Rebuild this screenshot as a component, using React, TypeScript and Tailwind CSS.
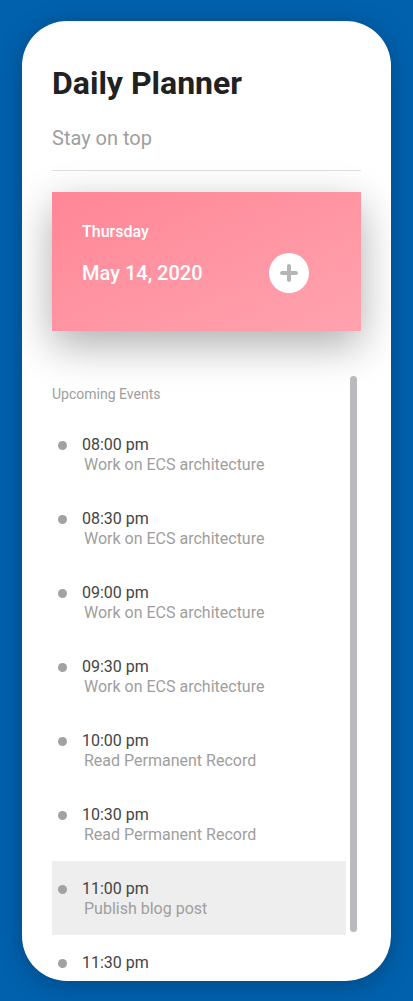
const events = [
  { time: "08:00 pm", title: "Work on ECS architecture" },
  { time: "08:30 pm", title: "Work on ECS architecture" },
  { time: "09:00 pm", title: "Work on ECS architecture" },
  { time: "09:30 pm", title: "Work on ECS architecture" },
  { time: "10:00 pm", title: "Read Permanent Record" },
  { time: "10:30 pm", title: "Read Permanent Record" },
  { time: "11:00 pm", title: "Publish blog post", active: true },
  { time: "11:30 pm", title: "" },
];

const App = () => {
  return (
    <div className="min-h-screen bg-[#0161ad] px-[22px] pt-[21px] font-['Roboto',sans-serif]">
      <div className="h-[960px] overflow-hidden rounded-[45px] bg-white px-[30px] pt-[43px] shadow-[0_4px_24px_rgba(0,0,0,0.25)]">
        <h1 className="text-[32px] leading-[38px] font-bold text-[#212121]">Daily Planner</h1>
        <p className="mt-[24px] border-b border-[#e0e0e0] pb-[20px] text-[20px] leading-[24px] text-[#9e9e9e]">
          Stay on top
        </p>

        <div className="mt-[21px] h-[139px] bg-linear-to-br from-[#ff8696] to-[#ffa3af] pt-[30px] pr-[52px] pl-[30px] shadow-[0_14px_40px_rgba(0,0,0,0.32)]">
          <p className="text-[16px] leading-[20px] font-medium text-white">Thursday</p>
          <div className="mt-[11px] flex items-center justify-between">
            <span className="text-[20px] leading-[24px] font-medium text-white">May 14, 2020</span>
            <button className="flex size-10 items-center justify-center rounded-full bg-white">
              <svg width="18" height="18" viewBox="0 0 18 18">
                <path d="M9 2v14M2 9h14" stroke="#b5b5b5" strokeWidth="4" strokeLinecap="round" />
              </svg>
            </button>
          </div>
        </div>

        <section className="mt-[45px] flex gap-[4px]">
          <div className="w-[294px] shrink-0">
            <h2 className="pt-[10px] text-[14px] leading-[16px] text-[#9e9e9e]">Upcoming Events</h2>
            <ul className="mt-[15px]">
              {events.map(({ time, title, active }) => (
                <li
                  key={time}
                  className={`flex h-[74px] items-start gap-[15px] pt-[18px] pl-[6px] ${active ? "bg-[#eeeeee]" : ""}`}
                >
                  <span className="mt-[6px] size-[9px] shrink-0 rounded-full bg-[#a3a1a3]" />
                  <div className="text-[16px] leading-[20px]">
                    <p className="text-[#444444]">{time}</p>
                    {title && <p className="pl-[2px] text-[#9e9e9e]">{title}</p>}
                  </div>
                </li>
              ))}
            </ul>
          </div>
          <div className="h-[556px] w-[7px] shrink-0 rounded-full bg-[#b9b9be]" />
        </section>
      </div>
    </div>
  );
};

export default App;
